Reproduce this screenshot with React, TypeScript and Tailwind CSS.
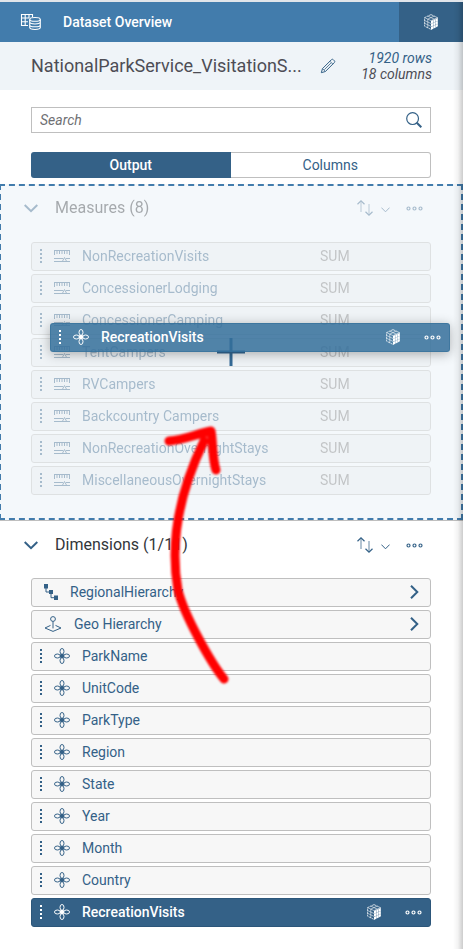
import React from "react";

type IconProps = { className?: string };

function DatasetIcon() {
  return (
    <svg width="22" height="18" viewBox="0 0 22 18" fill="none" stroke="currentColor" strokeWidth="1.1" aria-hidden="true">
      <path d="M8 12.5H1.5V1.5h11v2.5M1.5 5h8M1.5 8.7H8M5.2 1.5v11M9 1.5V5" />
      <ellipse cx="15" cy="6.4" rx="5.3" ry="1.9" />
      <path d="M9.7 6.4v8.2c0 1 2.4 1.9 5.3 1.9s5.3-.9 5.3-1.9V6.4M9.7 9.1c0 1 2.4 1.9 5.3 1.9s5.3-.9 5.3-1.9M9.7 11.9c0 1 2.4 1.9 5.3 1.9s5.3-.9 5.3-1.9" />
    </svg>
  );
}

function CubeIcon() {
  return (
    <svg width="14" height="16" viewBox="0 0 14 16" fill="none" stroke="currentColor" aria-hidden="true">
      <path d="M7 .6 13.4 3.6v8.6L7 15.4.6 12.2V3.6z" strokeWidth=".9" strokeDasharray="2.4 .5" opacity=".8" />
      <path d="M.6 3.6 7 6.6l6.400-3M3.800 2.100 10.200 5.100M10.200 2.100 3.800 5.100M.6 6.500 7 9.500M.6 9.300 7 12.400M3.800 5.100v8.700" strokeWidth=".8" opacity=".7" />
      <path d="M7 7l2-.9v2.700L7 9.700zM9.300 5.900l1.900-.9v2.800l-1.900.9zM11.500 4.900l2.100-.9v2.700l-2.100 1zM7 9.900l2-.9v2.700l-2 .9zM9.300 8.900l1.900-.9v2.700l-1.900.9zM11.500 7.900l2.100-1v2.700l-2.100 1zM7 12.900l2-.9v2.700l-2 1zM9.300 11.800l1.900-.9v2.700l-1.900 1zM11.500 10.800l2.100-1v2.500l-2.100 1.100z" fill="currentColor" stroke="none" />
    </svg>
  );
}

function PencilIcon() {
  return (
    <svg width="16" height="16" viewBox="0 0 16 16" fill="none" stroke="currentColor" strokeWidth="1" strokeLinejoin="round" aria-hidden="true">
      <path d="M1.3 14.7l1.2-4.1 8.9-8.9c.6-.6 1.300-.6 1.900 0l1 1c.6.6.6 1.300 0 1.900l-8.900 8.900z" />
      <path d="M9.900 3.200l2.900 2.900M2.500 10.600l2.900 2.900M4.300 11.700l6.600-6.600" strokeWidth=".8" />
    </svg>
  );
}

function SearchIcon() {
  return (
    <svg width="16" height="16" viewBox="0 0 16 16" fill="none" stroke="currentColor" aria-hidden="true">
      <circle cx="6.600" cy="6.600" r="5.900" strokeWidth="1.200" />
      <path d="M10.800 10.800l4.500 4.500" strokeWidth="2" />
    </svg>
  );
}

function ChevronIcon({ className }: IconProps) {
  return (
    <svg className={className} width="14" height="9" viewBox="0 0 14 9" fill="none" stroke="currentColor" strokeWidth="2" aria-hidden="true">
      <path d="M.7 1 7 7.200 13.300 1" />
    </svg>
  );
}

function ChevronRightIcon() {
  return (
    <svg width="9" height="14" viewBox="0 0 9 14" fill="none" stroke="currentColor" strokeWidth="2" aria-hidden="true">
      <path d="M1 .7 7.300 7 1 13.300" />
    </svg>
  );
}

function SortIcon() {
  return (
    <svg width="16" height="16" viewBox="0 0 16 16" fill="none" stroke="currentColor" aria-hidden="true">
      <path d="M4 12V1M12 4v11" strokeWidth="1" opacity=".75" />
      <path d="M.5 4.300 4 .9l3.500 3.400M8.500 11.700l3.500 3.400 3.500-3.400" strokeWidth="1.200" />
    </svg>
  );
}

function MoreIcon() {
  return (
    <svg width="17" height="5" viewBox="0 0 17 5" fill="none" stroke="currentColor" strokeWidth="1.200" aria-hidden="true">
      <circle cx="2.500" cy="2.500" r="1.500" />
      <circle cx="8.500" cy="2.500" r="1.500" />
      <circle cx="14.500" cy="2.500" r="1.500" />
    </svg>
  );
}

function GripIcon() {
  return (
    <svg className="shrink-0" width="2" height="14" viewBox="0 0 2 14" fill="currentColor" aria-hidden="true">
      <path d="M0 0h2v2H0zM0 4h2v2H0zM0 8h2v2H0zM0 12h2v2H0z" />
    </svg>
  );
}

function DimensionIcon() {
  return (
    <svg className="shrink-0" width="16" height="16" viewBox="0 0 16 16" fill="none" stroke="currentColor" strokeWidth="1" aria-hidden="true">
      <ellipse cx="8" cy="3.400" rx="2" ry="2.900" />
      <ellipse cx="8" cy="12.600" rx="2" ry="2.900" />
      <ellipse cx="3.400" cy="8" rx="2.900" ry="2" />
      <ellipse cx="12.600" cy="8" rx="2.900" ry="2" />
      <rect x="6" y="6" width="4" height="4" rx="1" fill="currentColor" stroke="none" />
    </svg>
  );
}

function MeasureIcon() {
  return (
    <svg className="shrink-0" width="16" height="14" viewBox="0 0 16 14" fill="none" stroke="currentColor" strokeWidth="1" aria-hidden="true">
      <path d="M0 1.500h16M.5 1v5M3 1v4M5.500 1v4M8 1v4M10.500 1v4M13 1v4M15.500 1v5" />
      <path d="M0 9.500h9M12 9.500h4M0 12.500h16" />
      <path d="M10.500 8.500l2.200 4H8.300z" />
    </svg>
  );
}

function HierarchyIcon() {
  return (
    <svg className="shrink-0" width="14" height="16" viewBox="0 0 14 16" aria-hidden="true">
      <path d="M0 0h4v4.500H0zM5 6h4v4H5zM10 11.500h4V16h-4z" fill="currentColor" />
      <path d="M2 4v4h3M7 10v3.700h3" fill="none" stroke="currentColor" />
    </svg>
  );
}

function GeoIcon() {
  return (
    <svg className="shrink-0" width="18" height="16" viewBox="0 0 18 16" fill="none" stroke="currentColor" aria-hidden="true">
      <circle cx="9" cy="3" r="2.400" />
      <path d="M9 5.400v7M6.500 9.400 1 12l8 3.400L17 12l-5.500-2.600" />
    </svg>
  );
}

const measures = [
  "NonRecreationVisits",
  "ConcessionerLodging",
  "ConcessionerCamping",
  "TentCampers",
  "RVCampers",
  "Backcountry Campers",
  "NonRecreationOvernightStays",
  "MiscellaneousOvernightStays",
];

const dimensions = ["ParkName", "UnitCode", "ParkType", "Region", "State", "Year", "Month", "Country"];

const rowClass = "flex h-[29px] items-center rounded-[3px] border border-[#bfbfbf] bg-[#f7f7f7] pb-px text-sm text-[#346187]";

function SectionHeader({ title, className }: { title: string; className: string }) {
  return (
    <div className={`flex h-14 items-center pl-6 text-[#346187] ${className}`}>
      <button type="button" aria-label={`Collapse ${title}`}>
        <ChevronIcon />
      </button>
      <h2 className="ml-[17px] flex-1 text-base text-[#32363a]">{title}</h2>
      <button type="button" aria-label={`Sort ${title}`} className="flex items-center gap-2">
        <SortIcon />
        <svg className="mt-1" width="9" height="6" viewBox="0 0 9 6" fill="none" stroke="currentColor" aria-hidden="true">
          <path d="M.4.6l4.100 4.200L8.600.6" />
        </svg>
      </button>
      <button type="button" aria-label={`More options for ${title}`} className="ml-4">
        <MoreIcon />
      </button>
    </div>
  );
}

function SelectedRow({ className }: { className: string }) {
  return (
    <div className={`flex h-[29px] items-center gap-3 rounded-[3px] border pr-2 pb-px pl-2 text-sm text-white ${className}`}>
      <GripIcon />
      <DimensionIcon />
      <span className="flex-1 font-medium">RecreationVisits</span>
      <CubeIcon />
      <button type="button" aria-label="More options for RecreationVisits" className="ml-3">
        <MoreIcon />
      </button>
    </div>
  );
}

export default function App() {
  return (
    <div className="relative min-h-screen overflow-hidden border-t-2 border-[#e1e5ea] bg-white font-['Roboto','Liberation_Sans',sans-serif] text-sm">
      <header className="flex h-10 items-center bg-[#427cac] pl-5 text-white">
        <DatasetIcon />
        <h1 className="ml-[21px] flex-1 font-medium">Dataset Overview</h1>
        <button type="button" aria-label="Model structure" className="flex h-full w-16 items-center justify-center bg-[#346187]">
          <CubeIcon />
        </button>
      </header>

      <div className="flex h-12 items-center bg-[#eff4f8] pr-[31px] pl-[31px]">
        <p className="text-lg whitespace-nowrap text-[#4d4d55]">NationalParkService_VisitationS...</p>
        <button type="button" aria-label="Rename dataset" className="ml-auto text-[#346187]">
          <PencilIcon />
        </button>
        <p className="w-24 text-right leading-4 text-[#4d4d55] italic">
          <a href="#rows" className="block text-[#346187]">1920 rows</a>
          18 columns
        </p>
      </div>

      <div className="pt-[17px] pr-8 pb-1.5 pl-[31px]">
        <div className="flex h-[26px] items-center border border-[#bfbfbf] pr-2 pl-2 text-[#346187]">
          <input type="search" aria-label="Search" placeholder="Search" className="min-w-0 flex-1 bg-transparent italic outline-none placeholder:text-[#6f7074]" />
          <button type="button" aria-label="Run search">
            <SearchIcon />
          </button>
        </div>
        <div className="mt-[19px] flex h-[26px]">
          <button type="button" className="flex-1 rounded-l-[3px] bg-[#346187] font-medium text-white">Output</button>
          <button type="button" className="flex-1 rounded-r-[3px] border border-l-0 border-[#bfbfbf] text-[#346187]">Columns</button>
        </div>
      </div>

      <section className="relative -ml-px border-2 border-dashed border-[#427cac] bg-[#f4f8fb]">
        <div className="-ml-px pb-[23px] opacity-40">
          <SectionHeader title="Measures (8)" className="pr-[38px] pb-3" />
          <ul className="flex flex-col gap-[3px] pr-[30px] pl-[31px]">
            {measures.map((name) => (
              <li key={name} className={`${rowClass} gap-3 !bg-[#eaeef1] pl-2`}>
                <GripIcon />
                <MeasureIcon />
                <span className="flex-1">{name}</span>
                <span className="w-[110px] text-[#7a7a7a]">SUM</span>
              </li>
            ))}
          </ul>
        </div>
        <div className="pointer-events-none absolute inset-0 flex items-center justify-center text-[#346a96]">
          <svg width="28" height="28" viewBox="0 0 28 28" stroke="currentColor" strokeWidth="3" aria-hidden="true">
            <path d="M14 0v28M0 14h28" />
          </svg>
        </div>
        <div className="absolute top-[137px] right-[11px] left-[49px]">
          <SelectedRow className="border-[#346f9a]/60 bg-[#346f9a]/85 shadow-[0_2px_12px_rgba(0,0,0,0.3)]" />
        </div>
      </section>

      <section className="border-t border-[#bfbfbf] pt-px">
        <SectionHeader title="Dimensions (1/11)" className="pr-10 pb-2.5" />
        <ul className="flex flex-col gap-[3px] pr-8 pl-[31px]">
          <li className={`${rowClass} gap-3 pr-[11px] pl-3`}>
            <HierarchyIcon />
            <span className="flex-1">RegionalHierarchy</span>
            <button type="button" aria-label="Open RegionalHierarchy">
              <ChevronRightIcon />
            </button>
          </li>
          <li className={`${rowClass} gap-3 pr-[11px] pl-3`}>
            <GeoIcon />
            <span className="flex-1">Geo Hierarchy</span>
            <button type="button" aria-label="Open Geo Hierarchy">
              <ChevronRightIcon />
            </button>
          </li>
          {dimensions.map((name) => (
            <li key={name} className={`${rowClass} gap-3 pl-2`}>
              <GripIcon />
              <DimensionIcon />
              <span>{name}</span>
            </li>
          ))}
          <li>
            <SelectedRow className="border-[#2c567a] bg-[#346187]" />
          </li>
        </ul>
      </section>

      <svg className="pointer-events-none absolute top-[418px] left-[160px]" width="80" height="275" viewBox="160 420 80 275" fill="none" stroke="#ff0000" strokeWidth="9" strokeLinecap="round" strokeLinejoin="round" aria-hidden="true">
        <defs>
          <filter id="soft" x="-20%" y="-20%" width="140%" height="140%">
            <feGaussianBlur stdDeviation="1.100" />
          </filter>
        </defs>
        <g filter="url(#soft)">
          <path d="M224 679C211 663 184 615 178 590C170 545 178 495 204 441" />
          <path d="M169 441C184 440 196 434 211 431C213 440 212 458 216 470" />
        </g>
      </svg>

      <div className="pointer-events-none absolute inset-y-0 right-0 w-2.5 bg-linear-to-l from-black/20 via-black/5 to-transparent" />
    </div>
  );
}
